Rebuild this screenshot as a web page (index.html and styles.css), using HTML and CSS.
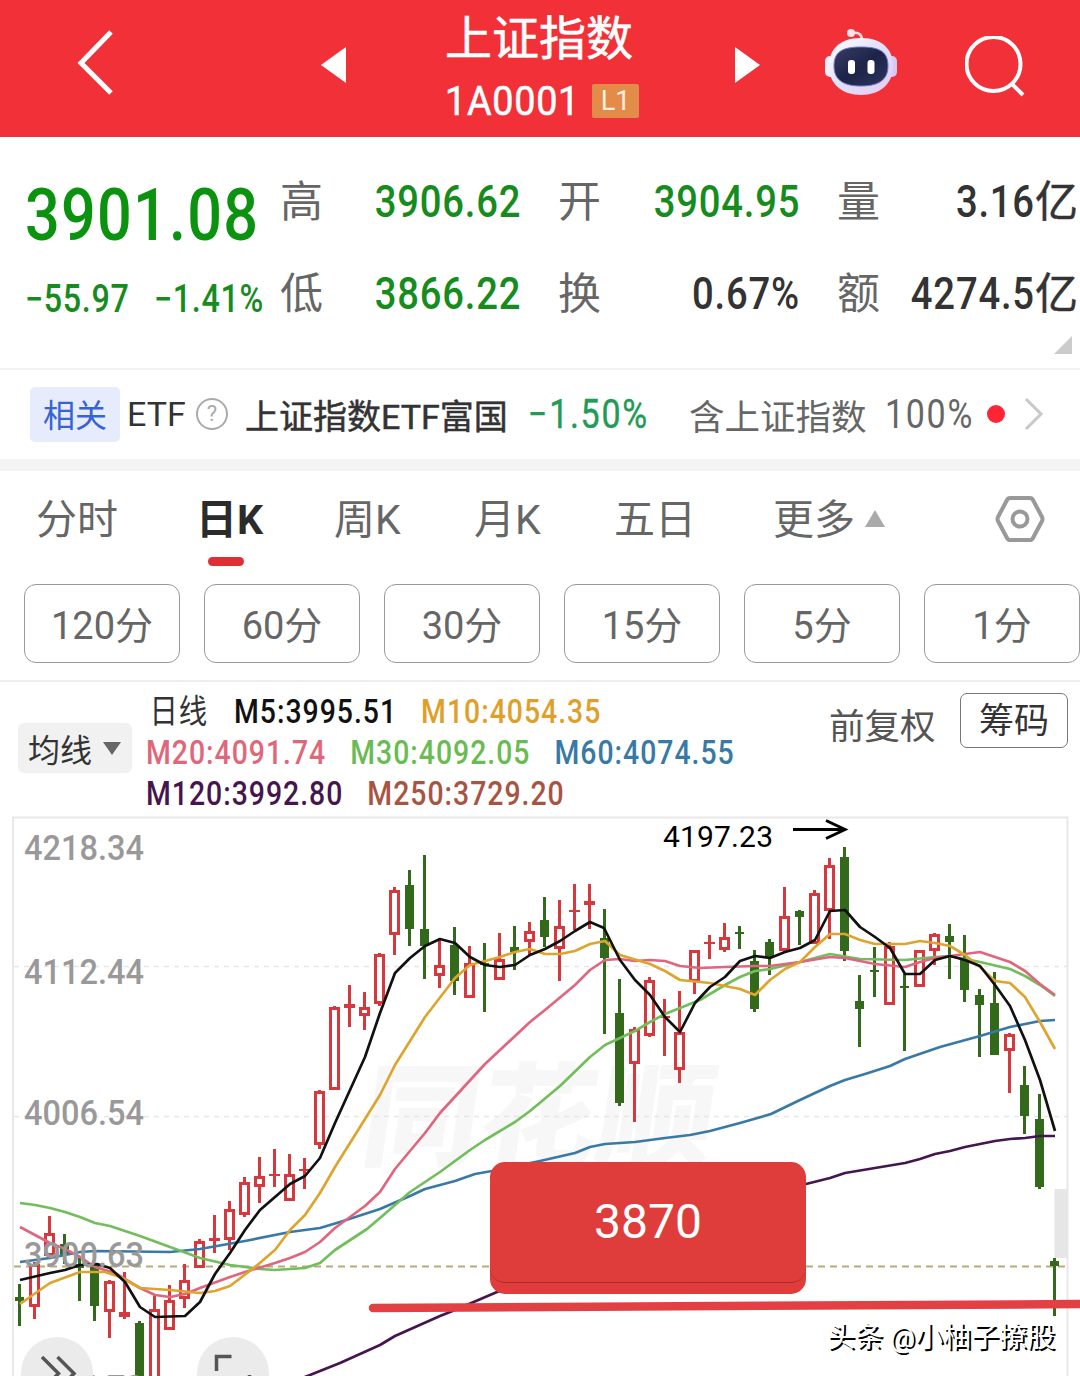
FILE: index.html
```html
<!DOCTYPE html>
<html lang="zh-CN">
<head>
    <meta charset="UTF-8" />
    <meta name="viewport" content="width=device-width, initial-scale=1.0"/>
    <title>上证指数</title>
    <link rel="stylesheet" href="styles.css">
</head>
<body>
<header class="topbar">
    <svg class="icon-back" width="38" height="66" viewBox="0 0 38 66"><path d="M35 2 L5 33 L35 63"/></svg>
    <svg class="icon-prev" width="25" height="36" viewBox="0 0 25 36"><path d="M0 18 L25 0 V36 Z"/></svg>
    <div class="title">
        <h1>上证指数</h1>
        <div class="code"><span class="code-num">1A0001</span><span class="level">L1</span></div>
    </div>
    <svg class="icon-next" width="25" height="36" viewBox="0 0 25 36"><path d="M25 18 L0 0 V36 Z"/></svg>
    <svg class="icon-robot" width="74" height="72" viewBox="824 28 74 72">
        <defs>
            <linearGradient id="shell" x1="0" y1="0" x2="1" y2="1">
                <stop offset="0" stop-color="#fff"/>
                <stop offset="0.5" stop-color="#dfe0fb"/>
                <stop offset="1" stop-color="#e9c9ee"/>
            </linearGradient>
            <linearGradient id="face" x1="0" y1="0" x2="1" y2="1">
                <stop offset="0" stop-color="#3a3b66"/>
                <stop offset="0.5" stop-color="#1d2448"/>
                <stop offset="1" stop-color="#2c3560"/>
            </linearGradient>
        </defs>
        <path d="M862 40 C862 34 858 32 852 33" fill="none" stroke="#ffd9de" stroke-width="2.6"/>
        <circle cx="851" cy="33" r="4" fill="#ffe3e6"/>
        <rect x="825" y="56" width="11" height="21" rx="5" fill="#f3eefc"/>
        <rect x="886" y="56" width="11" height="21" rx="5" fill="#d9c8f4"/>
        <path d="M861 38 C884 38 893 51 893 66 C893 84 880 95 861 95 C842 95 829 84 829 66 C829 51 838 38 861 38Z" fill="url(#shell)"/>
        <path d="M861 47 C880 47 888 52 888 66 C888 81 877 86 861 86 C845 86 834 81 834 66 C834 52 842 47 861 47Z" fill="url(#face)" stroke="#6d78c8" stroke-width="1"/>
        <rect x="848" y="60" width="7" height="14" rx="3" fill="#fff"/>
        <rect x="867.500" y="60" width="7" height="14" rx="3" fill="#fff"/>
    </svg>
    <svg class="icon-search" width="62" height="64" viewBox="0 0 62 64">
        <circle cx="28.500" cy="28" r="27"/>
        <path d="M47 48 L58 59"/>
    </svg>
</header>

<section class="quote">
    <div class="price">
        <div class="last num">3901.08</div>
        <div class="change"><span class="num">−55.97</span><span class="num">−1.41%</span></div>
    </div>
    <dl class="stats">
        <dt>高</dt><dd class="down"><span class="num">3906.62</span></dd>
        <dt>开</dt><dd class="down"><span class="num">3904.95</span></dd>
        <dt>量</dt><dd><span class="num">3.16</span>亿</dd>
        <dt>低</dt><dd class="down"><span class="num">3866.22</span></dd>
        <dt>换</dt><dd><span class="num">0.67%</span></dd>
        <dt>额</dt><dd><span class="num">4274.5</span>亿</dd>
    </dl>
    <div class="fold"></div>
</section>

<section class="etf">
    <span class="chip">相关</span>
    <span class="etf-label">ETF</span>
    <span class="help">?</span>
    <span class="etf-name">上证指数ETF富国</span>
    <span class="etf-change num">−1.50%</span>
    <span class="etf-hold">含上证指数</span>
    <span class="etf-pct num">100%</span>
    <span class="dot"></span>
    <svg class="icon-more" width="20" height="34" viewBox="0 0 20 34"><path d="M2 2 L17 17 L2 32"/></svg>
</section>

<nav class="tabs">
    <a>分时</a>
    <a class="active">日K</a>
    <a>周K</a>
    <a>月K</a>
    <a>五日</a>
    <a class="more">更多<svg width="22" height="19" viewBox="0 0 22 19"><path d="M11 1 L21 18 H1 Z"/></svg></a>
    <svg class="icon-setting" width="50" height="48" viewBox="0 0 50 48">
        <path d="M15 3 H35 Q37 3 38 5 L47 22 Q48 24 47 26 L38 43 Q37 45 35 45 H15 Q13 45 12 43 L3 26 Q2 24 3 22 L12 5 Q13 3 15 3Z"/>
        <circle cx="25" cy="24" r="7.500"/>
    </svg>
</nav>

<div class="minutes">
    <button>120分</button>
    <button>60分</button>
    <button>30分</button>
    <button>15分</button>
    <button>5分</button>
    <button>1分</button>
</div>

<section class="legend">
    <div class="ma-select">均线<svg width="18" height="13" viewBox="0 0 18 13"><path d="M0 0 H18 L9 13 Z"/></svg></div>
    <div class="ma-list">
        <div class="ma-row"><b>日线</b><span>M5:3995.51</span><span class="ma10">M10:4054.35</span></div>
        <div class="ma-row"><span class="ma20">M20:4091.74</span><span class="ma30">M30:4092.05</span><span class="ma60">M60:4074.55</span></div>
        <div class="ma-row"><span class="ma120">M120:3992.80</span><span class="ma250">M250:3729.20</span></div>
    </div>
    <span class="adjust">前复权</span>
    <button class="chips">筹码</button>
</section>

<main class="chart">
    <svg id="kline" width="1080" height="560" viewBox="0 816 1080 560">
        <text class="watermark" transform="translate(358 1157) skewX(-8)" textLength="352" lengthAdjust="spacingAndGlyphs">同花顺</text>
        <path class="frame" d="M13 1380 V817.500 H1067.500 V1380"/>
        <path class="grid" d="M14 966.500 H1067 M14 1116.500 H1067"/>
        <rect x="1054.500" y="1189" width="13.500" height="69" fill="#e6e6e6"/>
        <path class="current" d="M14 1266.500 H1067"/>
        <g id="candles"></g>
        <g id="lines"></g>
        <g class="axis">
            <text x="24" y="859.500" textLength="120" lengthAdjust="spacingAndGlyphs">4218.34</text>
            <text x="24" y="984" textLength="120" lengthAdjust="spacingAndGlyphs">4112.44</text>
            <text x="24" y="1125" textLength="120" lengthAdjust="spacingAndGlyphs">4006.54</text>
            <text x="24" y="1267" textLength="120" lengthAdjust="spacingAndGlyphs">3900.63</text>
            <text x="24" y="1400" textLength="120" lengthAdjust="spacingAndGlyphs">3794.73</text>
        </g>
        <text class="peak" x="663" y="847" textLength="110">4197.23</text>
        <path class="arrow" d="M793 829.500 H844 M826 820.500 L845 829.500 L826 838.500"/>
        <g class="tool">
            <circle cx="57" cy="1373" r="36"/>
            <path d="M42 1357 L58.500 1373.500 L42 1390 M57.500 1357 L74 1373.500 L57.500 1390"/>
            <circle cx="233" cy="1373" r="36"/>
            <path d="M216.500 1371 V1356.500 H231.500 M249.500 1375 V1389.500 H234.500"/>
        </g>
        <path class="support" d="M373 1308 L1090 1304"/>
    </svg>
    <div class="callout"><div class="callout-face">3870</div></div>
    <div class="author">头条 @小柚子撩股</div>
</main>

<script>
    // [涨跌, 最高, 最低, 实体上沿, 实体下沿]
    const candles = [
        ['g', 1284, 1326, 1297, 1301], ['r', 1262, 1319, 1264, 1307], ['r', 1216, 1258, 1233, 1256],
        ['g', 1234, 1264, 1244, 1255], ['g', 1258, 1301, 1264, 1268], ['g', 1263, 1321, 1265, 1306],
        ['r', 1280, 1338, 1281, 1312], ['r', 1272, 1319, 1312, 1317], ['g', 1321, 1390, 1323, 1385],
        ['r', 1295, 1390, 1309, 1385], ['r', 1285, 1330, 1300, 1330], ['r', 1264, 1308, 1280, 1299],
        ['r', 1239, 1268, 1241, 1268], ['r', 1215, 1253, 1238, 1241], ['r', 1201, 1250, 1209, 1240],
        ['r', 1177, 1217, 1182, 1215], ['r', 1157, 1203, 1176, 1187], ['r', 1149, 1187, 1174, 1176],
        ['r', 1154, 1201, 1174, 1201], ['r', 1158, 1189, 1169, 1171], ['r', 1090, 1149, 1091, 1145],
        ['r', 1006, 1090, 1007, 1090], ['r', 985, 1027, 1004, 1008], ['r', 992, 1030, 1007, 1016],
        ['r', 953, 1006, 954, 1004], ['r', 887, 955, 890, 935], ['g', 870, 946, 885, 929],
        ['g', 855, 979, 929, 946], ['r', 938, 988, 965, 976], ['g', 927, 995, 945, 981],
        ['r', 946, 998, 963, 998], ['g', 943, 1012, 963, 965], ['r', 933, 980, 959, 980],
        ['g', 926, 970, 947, 952], ['r', 922, 956, 931, 942], ['g', 897, 947, 920, 937],
        ['r', 900, 981, 926, 949], ['r', 884, 930, 910, 912], ['r', 884, 929, 901, 905],
        ['g', 909, 1034, 938, 958], ['g', 979, 1106, 1013, 1103], ['r', 1027, 1122, 1029, 1064],
        ['r', 977, 1037, 980, 1036], ['r', 999, 1056, 1016, 1018], ['r', 991, 1083, 1032, 1070],
        ['r', 950, 994, 950, 982], ['r', 935, 959, 942, 944], ['r', 923, 952, 937, 950],
        ['g', 926, 949, 932, 934], ['g', 950, 1012, 961, 1009], ['g', 939, 975, 942, 958],
        ['r', 887, 952, 916, 951], ['g', 910, 945, 911, 917], ['r', 890, 944, 893, 944],
        ['r', 858, 939, 865, 911], ['g', 847, 961, 857, 951], ['g', 975, 1047, 1001, 1009],
        ['g', 947, 997, 970, 972], ['r', 942, 1005, 946, 1005], ['g', 974, 1051, 986, 988],
        ['r', 950, 987, 950, 987], ['r', 933, 965, 934, 951], ['g', 924, 979, 936, 942],
        ['g', 935, 1002, 960, 990], ['g', 989, 1057, 995, 1005], ['g', 972, 1055, 1003, 1055],
        ['r', 1033, 1093, 1034, 1051], ['g', 1066, 1134, 1085, 1116], ['g', 1094, 1189, 1119, 1187],
        ['g', 1258, 1316, 1261, 1266]
    ];

    const lines = {
        ma120: '300,1379 340,1363 380,1345 395,1336 440,1316 455,1310 497,1292 620,1240 740,1200 806,1184 830,1178 845,1173 905,1163 920,1159 935,1154 950,1151 965,1147 995,1141 1010,1139 1025,1138 1040,1136 1055,1136',
        ma60: '20,1262 50,1258 80,1252 95,1251 170,1252 200,1249 245,1241 290,1232 320,1228 340,1222 380,1209 410,1196 425,1189 455,1181 475,1174 492,1171 540,1161 575,1153 590,1147 605,1144 635,1142 665,1138 690,1135 710,1131 740,1123 771,1114 800,1100 830,1086 845,1080 865,1074 890,1066 905,1059 940,1047 980,1036 1010,1027 1040,1021 1055,1020',
        ma30: '20,1203 35,1205 50,1208 65,1212 80,1217 95,1223 110,1226 140,1236 170,1247 200,1258 230,1265 260,1269 275,1270 305,1268 320,1263 335,1250 367,1229 380,1218 395,1205 410,1192 440,1172 470,1150 485,1140 515,1122 530,1111 560,1086 590,1057 605,1045 635,1031 650,1022 665,1014 680,1008 700,1000 725,985 740,977 755,971 770,969 800,962 830,954 860,959 905,960 935,957 950,956 980,962 1010,969 1025,976 1040,985 1055,996',
        ma20: '20,1227 50,1243 65,1249 80,1257 95,1267 115,1273 140,1288 155,1295 170,1297 185,1294 200,1288 230,1277 245,1272 275,1263 290,1258 305,1252 320,1242 335,1228 365,1206 380,1192 395,1169 425,1133 440,1113 485,1064 530,1022 545,1010 575,985 590,970 605,960 620,959 635,961 650,960 665,961 680,966 700,968 725,967 755,966 770,966 800,962 830,957 845,958 875,964 905,967 920,962 935,958 965,954 980,952 1010,962 1025,971 1040,984 1055,995',
        ma10: '20,1304 50,1283 80,1272 105,1272 120,1277 140,1288 170,1290 200,1293 215,1291 230,1286 255,1267 275,1250 290,1230 305,1215 320,1193 335,1167 360,1127 380,1095 395,1065 425,1017 455,978 470,965 500,957 515,952 530,949 545,954 560,954 575,951 590,944 605,941 620,955 650,964 665,971 680,980 710,983 740,989 755,995 770,980 785,969 800,962 815,947 830,934 845,934 860,940 875,944 905,944 920,941 935,943 950,946 965,955 980,967 995,981 1010,983 1025,997 1040,1022 1055,1049',
        ma5: '20,1280 50,1273 65,1270 80,1265 97,1264 110,1268 125,1282 140,1307 155,1317 185,1316 200,1302 215,1274 230,1253 245,1230 260,1210 275,1197 290,1184 305,1176 320,1158 335,1123 350,1090 365,1057 380,1013 395,973 410,958 425,946 440,939 455,943 470,957 485,965 500,967 515,965 530,955 545,949 560,941 575,931 590,922 604,928 620,960 635,980 650,995 665,1017 680,1032 695,1003 710,987 725,977 740,961 755,956 770,958 785,952 800,948 815,940 830,911 845,910 860,927 875,937 890,948 905,974 920,974 935,960 950,956 965,960 980,966 995,985 1010,1006 1025,1040 1040,1080 1055,1131'
    };

    document.getElementById('candles').innerHTML = candles.map(([type, high, low, top, bottom], i) => {
        const x = 19.5 + i * 15;
        const h = bottom - top;
        // 实体太小时画成实心横线
        if (type === 'r' && h >= 7) {
            return `<path class="up" d="M${x} ${high} V${top} M${x} ${bottom} V${low}"/>
                <rect class="up" x="${x - 4}" y="${top + 1.5}" width="8" height="${h - 3}"/>`;
        }
        const cls = type === 'r' ? 'up' : 'fall';
        const w = type === 'r' ? 11 : 9;
        return `<path class="${cls}" d="M${x} ${high} V${low}"/>
            <rect class="${cls} solid" x="${x - w / 2}" y="${top}" width="${w}" height="${h}"/>`;
    }).join('');

    document.getElementById('lines').innerHTML = Object.entries(lines)
        .map(([name, points]) => `<polyline class="line-${name}" points="${points}"/>`)
        .join('');
</script>
</body>
</html>
```
FILE: styles.css
```css
* {
    box-sizing: border-box;
}

body {
    margin: 0;
    width: 1080px;
    height: 1376px;
    overflow: hidden;
    background-color: #fff;
    color: #333;
    font-family: Roboto, "Noto Sans CJK SC", sans-serif;
}

h1, dl, dd {
    margin: 0;
    font-weight: 400;
}

button {
    padding: 0;
    background: none;
    font-family: inherit;
    color: inherit;
}

svg {
    display: block;
    fill: none;
}

.num {
    display: inline-block;
    font-weight: 500;
    letter-spacing: 0.02em;
    white-space: nowrap;
    transform: scaleX(0.85);
    transform-origin: left center;
}

/* 顶部 */
.topbar {
    display: grid;
    grid-template-columns: 245px 107px 300px 90px 141px 68px;
    height: 137px;
    padding-left: 76px;
    background-color: #f23037;
    color: #fff;
}

.icon-back {
    margin-top: 30px;
    stroke: #fff;
    stroke-width: 5;
}

.icon-prev, .icon-next {
    margin-top: 47px;
    fill: #fff;
}

.icon-next {
    margin-left: 7px;
}

.icon-robot {
    margin-left: 6px;
    margin-top: 28px;
}

.icon-search {
    margin-left: 6px;
    margin-top: 36px;
    stroke: #fff;
    stroke-width: 4;
}

.title {
    padding-top: 8px;
    padding-left: 17px;
}

.title h1 {
    font-size: 47px;
    line-height: 62px;
    -webkit-text-stroke: 0.6px;
}

.code {
    display: flex;
    margin-top: 7px;
    height: 48px;
    align-items: center;
}

.code-num {
    width: 147px;
    font-size: 41px;
    letter-spacing: 0.8px;
    transform: scaleX(0.92);
    transform-origin: left center;
    -webkit-text-stroke: 0.6px;
}

.level {
    width: 47px;
    height: 34px;
    border-radius: 2px;
    background-color: #e38b48;
    color: #fff0df;
    font-size: 27px;
    line-height: 35px;
    text-align: center;
}

/* 行情 */
.quote {
    position: relative;
    display: flex;
    height: 231px;
    padding-left: 25px;
}

.price {
    width: 255px;
    padding-top: 36px;
    color: #0b9310;
}

.last {
    font-size: 72px;
    line-height: 86px;
}

.change {
    display: grid;
    grid-template-columns: 129px 120px;
    margin-top: 18px;
    color: #178c1e;
    font-size: 38px;
    line-height: 44px;
}

.stats {
    display: grid;
    grid-template-columns: 43px 198px 80px 199px 80px 198px;
    grid-template-rows: 92px 92px;
    padding-top: 19px;
    align-items: center;
    font-size: 43px;
    line-height: 60px;
}

.stats dt {
    color: #666;
    text-align: right;
}

.stats dd {
    display: flex;
    justify-content: flex-end;
    -webkit-text-stroke: 0.5px;
}

.stats .num {
    font-size: 45px;
    transform-origin: right center;
    -webkit-text-stroke: 0;
}

.down {
    color: #178c1e;
}

.fold {
    position: absolute;
    right: 8px;
    bottom: 14px;
    border-bottom: 18px solid #ccc;
    border-left: 18px solid transparent;
}

/* 相关ETF */
.etf {
    display: flex;
    align-items: center;
    height: 103px;
    padding: 0 0 1px 30px;
    border-top: 2px solid #f1f1f1;
    border-bottom: 12px solid #f4f4f4;
    font-size: 34px;
    white-space: nowrap;
}

.etf > * {
    flex-shrink: 0;
}

.chip {
    width: 90px;
    height: 55px;
    border-radius: 5px;
    background-color: #e6ecfb;
    color: #3763d6;
    font-size: 32px;
    line-height: 58px;
    text-align: center;
}

.etf-label {
    width: 69px;
    padding-left: 7px;
}

.help {
    width: 32px;
    height: 32px;
    margin-left: 7px;
    border: 2px solid #aaa;
    border-radius: 50%;
    color: #aaa;
    font-size: 22px;
    line-height: 28px;
    text-align: center;
}

.etf-name {
    width: 300px;
    padding-left: 17px;
    -webkit-text-stroke: 0.5px;
}

.etf-change {
    width: 161px;
    color: #239a55;
    font-size: 40px;
    letter-spacing: 0.05em;
    font-weight: 400;
    -webkit-text-stroke: 0.4px;
}

.etf-hold {
    width: 196px;
    color: #666;
    font-size: 35.5px;
}

.etf-pct {
    width: 102px;
    color: #666;
    font-size: 40px;
    letter-spacing: 0.05em;
    font-weight: 400;
}

.dot {
    width: 18px;
    height: 18px;
    border-radius: 50%;
    background-color: #ff2436;
}

.icon-more {
    margin-left: 19px;
    stroke: #c8c8c8;
    stroke-width: 3;
}

/* 周期 */
.tabs {
    display: grid;
    grid-template-columns: 160px 138px 140px 140px 159px 222px 50px;
    height: 113px;
    padding: 18px 0 0 36px;
    color: #666;
    font-size: 41px;
    line-height: 62px;
}

.active {
    color: #2b2b2b;
    font-weight: 700;
}

.active::after {
    content: "";
    display: block;
    width: 36px;
    height: 9px;
    margin: 6px 0 0 12px;
    border-radius: 5px;
    background-color: #dc3035;
}

.more {
    display: flex;
}

.more svg {
    margin: 20px 0 0 9px;
    fill: #aaa;
}

.icon-setting {
    margin-top: 6px;
    stroke: #999;
    stroke-width: 4;
}

.minutes {
    display: flex;
    gap: 24px;
    height: 96px;
    padding-left: 24px;
}

.minutes button {
    flex: 0 0 156px;
    height: 79px;
    padding-bottom: 3px;
    border: 1px solid #999;
    border-radius: 12px;
    color: #666;
    font-size: 38px;
}

/* 均线 */
.legend {
    display: flex;
    height: 136px;
    padding-left: 18px;
    border-top: 2px solid #eee;
}

.ma-select {
    display: flex;
    align-items: center;
    gap: 11px;
    width: 114px;
    height: 50px;
    margin-top: 41px;
    padding-left: 10px;
    border-radius: 6px;
    background-color: #f1f1f1;
    font-size: 32px;
}

.ma-select svg {
    fill: #666;
}

.ma-list {
    width: 697px;
    padding: 9px 0 0 14px;
}

.ma-row {
    display: flex;
    gap: 28px;
    height: 41px;
    color: #111;
    font-size: 33px;
    font-weight: 500;
    letter-spacing: 0.035em;
    line-height: 41px;
    white-space: nowrap;
    transform: scaleX(0.86);
    transform-origin: left center;
}

.ma-row b {
    margin: 0 2px 0 4px;
    color: #333;
    font-weight: 400;
}

.ma10 { color: #dfa02a; }
.ma20 { color: #e0667a; }
.ma30 { color: #6abb53; }
.ma60 { color: #3879a6; }
.ma120 { color: #45154f; }
.ma250 { color: #a85443; }

.adjust {
    width: 131px;
    margin-top: 19px;
    color: #555;
    font-size: 35.5px;
    line-height: 52px;
}

.chips {
    width: 108px;
    height: 55px;
    margin-top: 11px;
    padding-top: 3px;
    border: 1px solid #777;
    border-radius: 7px;
    font-size: 35px;
    line-height: 50px;
}

/* K线图 */
.chart {
    position: relative;
    height: 560px;
}

.frame { stroke: #e8e8e8; stroke-width: 2; }
.grid { stroke: #e6e6e6; stroke-width: 1.5; stroke-dasharray: 5 5; }
.current { stroke: #b5ab78; stroke-width: 1.8; stroke-dasharray: 7 5; }

.watermark {
    fill: #f7f7f7;
    font-family: "Noto Sans CJK SC", sans-serif;
    font-size: 112px;
    font-weight: 900;
}

.axis {
    fill: #999;
    font-size: 35px;
    font-weight: 500;
}

.peak {
    fill: #000;
    font-size: 30px;
}

.arrow {
    stroke: #000;
    stroke-width: 3;
}

.up {
    stroke: #d6393d;
    stroke-width: 3;
}

.fall {
    stroke: #33691b;
    stroke-width: 3;
}

.solid { stroke: none; }
.up.solid { fill: #d6393d; }
.fall.solid { fill: #33691b; }

#lines {
    stroke-width: 2.7;
    stroke-linejoin: round;
}

.line-ma5 { stroke: #111; }
.line-ma10 { stroke: #dda52f; }
.line-ma20 { stroke: #e0667f; }
.line-ma30 { stroke: #72bd5c; }
.line-ma60 { stroke: #3879a6; }
.line-ma120 { stroke: #45154f; }

.tool circle {
    fill: #ebebeb;
}

.tool path {
    stroke: #555;
    stroke-width: 3.5;
}

.support {
    stroke: #e34043;
    stroke-width: 8.5;
    stroke-linecap: round;
}

.callout {
    position: absolute;
    left: 490px;
    top: 346px;
    width: 316px;
    height: 132px;
    border-radius: 15px;
    background-color: #df3d3b;
}

.callout-face {
    height: 121px;
    border-bottom: 1px solid #a82a2a;
    border-radius: 15px;
    color: #fff;
    font-size: 48px;
    line-height: 120px;
    text-align: center;
}

.author {
    position: absolute;
    right: 25px;
    top: 502px;
    color: #fff;
    font-size: 28px;
    line-height: 40px;
    text-shadow: 2px 2px 0 #000;
    white-space: nowrap;
}
```
